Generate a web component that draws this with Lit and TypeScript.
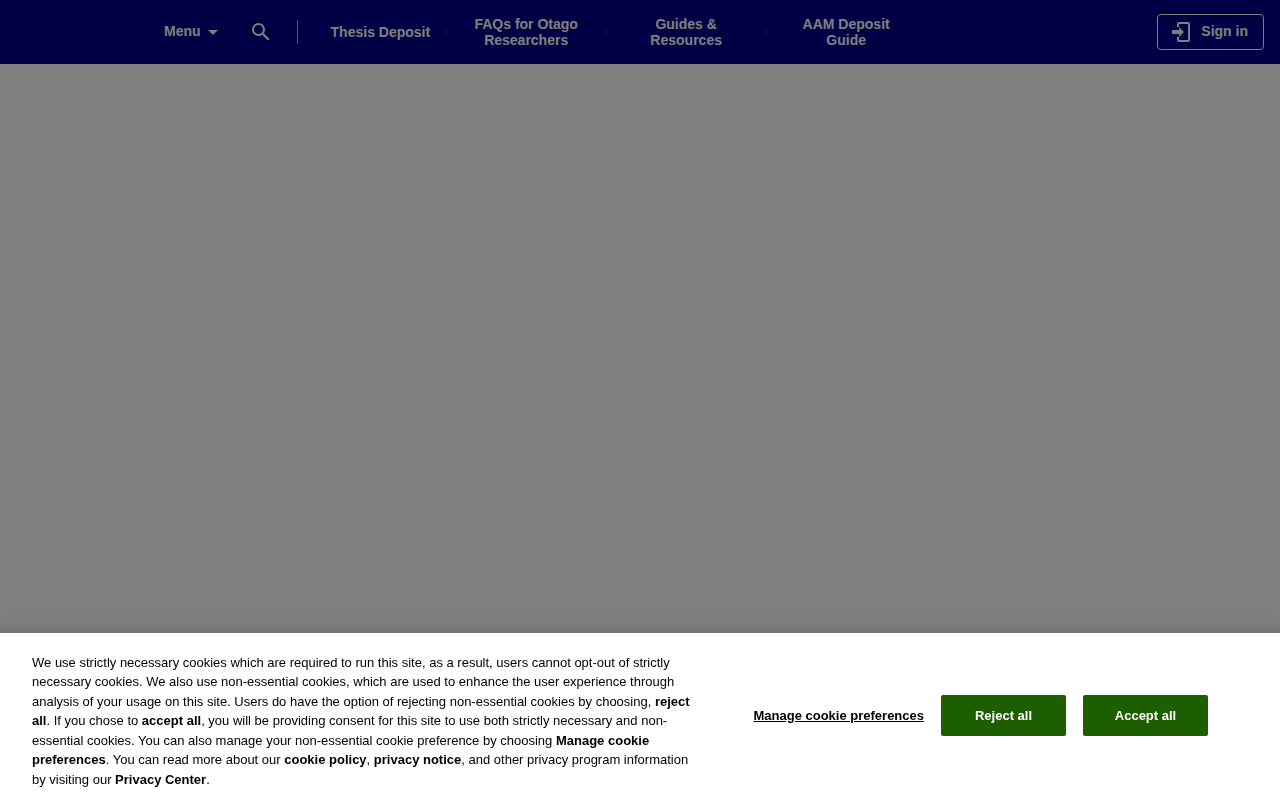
import { LitElement, html, css } from "lit";
import { customElement } from "lit/decorators.js";

const LINKS = [
  "Thesis Deposit",
  "FAQs for Otago Researchers",
  "Guides & Resources",
  "AAM Deposit Guide",
];

@customElement("site-header")
class SiteHeader extends LitElement {
  static styles = css`
    :host {
      display: block;
    }
    .bar {
      display: flex;
      align-items: center;
      height: 64px;
      padding: 0 16px 0 164px;
      background: #00008a;
      color: #fff;
      font-size: 14px;
      font-weight: bold;
      line-height: 16px;
    }
    button {
      display: flex;
      align-items: center;
      margin: 0;
      padding: 0;
      border: 0;
      background: none;
      color: inherit;
      font: inherit;
      cursor: pointer;
    }
    .menu {
      gap: 7px;
      padding-bottom: 2px;
    }
    .caret {
      width: 10px;
      height: 5px;
      margin-top: 3px;
    }
    .search {
      margin-left: 31px;
    }
    .divider {
      width: 1px;
      height: 24px;
      margin: 0 33px 0 24px;
      background: #fff;
      opacity: 0.7;
    }
    nav {
      display: flex;
      align-items: center;
      flex: 1;
    }
    .item {
      display: flex;
      align-items: center;
    }
    .item + .item::before {
      content: "";
      width: 2px;
      height: 2px;
      margin: 0 15px;
      border-radius: 1px;
      background: #fff;
      opacity: 0.25;
    }
    a {
      max-width: 128px;
      color: inherit;
      text-align: center;
      text-decoration: none;
    }
    .signin {
      box-sizing: border-box;
      height: 36px;
      gap: 8px;
      padding: 0 15px 0 11px;
      border: 1px solid #fff;
      border-radius: 4px;
    }
    .signin span {
      padding-bottom: 2px;
    }
    svg {
      display: block;
      fill: currentColor;
    }
  `;

  render() {
    return html`
      <header class="bar">
        <button class="menu" aria-haspopup="true">
          <span>Menu</span>
          <svg class="caret" viewBox="0 0 10 5"><path d="M0 0h10L5 5z" /></svg>
        </button>
        <button class="search" aria-label="Search">
          <svg width="24" height="24" viewBox="0 0 24 24">
            <path
              d="M15.5 14h-.79l-.28-.27A6.47 6.47 0 0 0 16 9.5 6.5 6.5 0 1 0 9.5 16c1.61 0 3.09-.59 4.23-1.57l.27.28v.79l5 4.99L20.49 19l-4.99-5zm-6 0a4.5 4.5 0 1 1 0-9 4.5 4.5 0 0 1 0 9z"
            />
          </svg>
        </button>
        <span class="divider"></span>
        <nav aria-label="Site">
          ${LINKS.map(
            (label) => html`<div class="item"><a href="#">${label}</a></div>`
          )}
        </nav>
        <button class="signin">
          <svg width="24" height="24" viewBox="0 0 24 24">
            <path
              d="M8 7V4a2 2 0 0 1 2-2h9a2 2 0 0 1 2 2v16a2 2 0 0 1-2 2h-9a2 2 0 0 1-2-2v-3h2v3h9V4h-9v3z"
            />
            <path d="M3 10h7V7l5 5-5 5v-3H3z" />
          </svg>
          <span>Sign in</span>
        </button>
      </header>
    `;
  }
}

@customElement("cookie-banner")
class CookieBanner extends LitElement {
  static styles = css`
    :host {
      display: block;
    }
    .banner {
      display: flex;
      align-items: center;
      padding: 0 72px 0 32px;
      background: #fff;
      color: #000;
      box-shadow: 0 0 18px rgba(0, 0, 0, 0.2);
      font-size: 13px;
    }
    p {
      flex: 1;
      max-width: 660px;
      margin: 0;
      padding: 20px 0 11px;
      line-height: 1.5;
    }
    a {
      color: inherit;
      font-weight: bold;
      text-decoration: none;
    }
    .actions {
      display: flex;
      align-items: center;
      gap: 17px;
      margin-left: auto;
      padding: 0 0 2px 32px;
    }
    button {
      box-sizing: border-box;
      margin: 0;
      border: 0;
      font: inherit;
      font-weight: bold;
      cursor: pointer;
    }
    .manage {
      padding: 0;
      background: none;
      color: #000;
      text-decoration: underline;
    }
    .solid {
      width: 125px;
      height: 41px;
      border-radius: 2px;
      background: #1c5e00;
      color: #fff;
    }
  `;

  render() {
    return html`
      <section class="banner" role="dialog" aria-label="Cookie consent">
        <p>
          We use strictly necessary cookies which are required to run this site,
          as a result, users cannot opt-out of strictly necessary cookies. We
          also use non-essential cookies, which are used to enhance the user
          experience through analysis of your usage on this site. Users do have
          the option of rejecting non-essential cookies by choosing,
          <b>reject all</b>. If you chose to <b>accept all</b>, you will be
          providing consent for this site to use both strictly necessary and
          non-essential cookies. You can also manage your non-essential cookie
          preference by choosing <b>Manage cookie preferences</b>. You can read
          more about our <a href="#">cookie policy</a>,
          <a href="#">privacy notice</a>, and other privacy program information
          by visiting our <a href="#">Privacy Center</a>.
        </p>
        <div class="actions">
          <button class="manage">Manage cookie preferences</button>
          <button class="solid">Reject all</button>
          <button class="solid">Accept all</button>
        </div>
      </section>
    `;
  }
}

@customElement("app-root")
class AppRoot extends LitElement {
  static styles = css`
    :host {
      display: block;
      min-height: 100vh;
      background: #fff;
      font-family: "Liberation Sans", Arial, sans-serif;
    }
    .overlay {
      position: fixed;
      inset: 0;
      background: rgba(0, 0, 0, 0.5);
    }
    .consent {
      position: fixed;
      left: 0;
      right: 0;
      bottom: 0;
    }
  `;

  render() {
    return html`
      <site-header></site-header>
      <div class="overlay"></div>
      <cookie-banner class="consent"></cookie-banner>
    `;
  }
}
